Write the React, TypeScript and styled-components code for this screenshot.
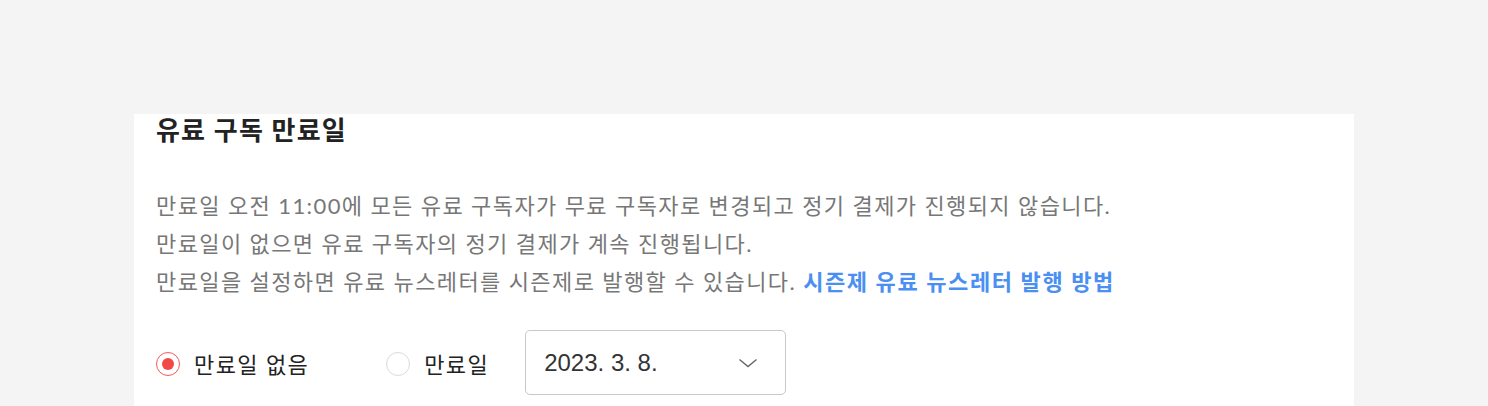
import React, { useState } from "react";
import styled, { createGlobalStyle } from "styled-components";

const GlobalStyle = createGlobalStyle`
  html, body {
    margin: 0;
    padding: 0;
    background: #f4f4f4;
  }
  body {
    font-family: "Lato", "Noto Sans CJK KR", sans-serif;
  }
`;

const Page = styled.div`
  width: 1488px;
  height: 406px;
  overflow: hidden;
  background: #f4f4f4;
  padding: 114px 0 0 134px;
  box-sizing: border-box;
`;

const Panel = styled.section`
  width: 1220px;
  height: 292px;
  background: #fff;
  padding: 0 22px;
  box-sizing: border-box;
`;

const Title = styled.h3`
  margin: 0;
  padding-top: 1px;
  font-size: 26px;
  font-weight: 700;
  color: #222;
  line-height: 30px;
  letter-spacing: 1.2px;
`;

const Desc = styled.p`
  margin: 42px 0 0;
  font-size: 22px;
  line-height: 38px;
  color: #777;
  letter-spacing: 1.4px;
`;

const Link = styled.a`
  color: #4a8ff2;
  text-decoration: none;
  font-weight: 700;
  letter-spacing: 1.6px;
`;

const OptionRow = styled.div`
  display: flex;
  align-items: center;
  margin-top: 29px;
`;

const RadioLabel = styled.label<{ $gap?: number }>`
  display: flex;
  align-items: center;
  gap: 14px;
  font-size: 22px;
  color: #222;
  letter-spacing: 1.4px;
  margin-right: ${(p) => p.$gap ?? 0}px;
  cursor: pointer;
`;

const RadioDot = styled.span<{ $checked: boolean }>`
  width: 24px;
  height: 24px;
  border-radius: 50%;
  box-sizing: border-box;
  border: 1.5px solid ${(p) => (p.$checked ? "#f25a5a" : "#dadada")};
  display: flex;
  align-items: center;
  justify-content: center;
  background: #fff;
  margin-top: 2px;

  &::after {
    content: "";
    width: 12px;
    height: 12px;
    border-radius: 50%;
    background: ${(p) => (p.$checked ? "#f24848" : "transparent")};
  }
`;

const Select = styled.div`
  width: 261px;
  height: 65px;
  box-sizing: border-box;
  border: 1px solid #c8c8c8;
  border-radius: 5px;
  display: flex;
  align-items: center;
  justify-content: space-between;
  padding: 0 27px 0 18px;
  font-family: "Liberation Sans", Arial, sans-serif;
  font-size: 24px;
  color: #333;
`;

const Chevron = () => (
  <svg width="20" height="10" viewBox="0 0 20 10" fill="none">
    <path d="M1.5 1.5L10 8.5L18.5 1.5" stroke="#666" strokeWidth="1.4" />
  </svg>
);

export default function App() {
  const [mode, setMode] = useState<"none" | "date">("none");

  return (
    <Page>
      <GlobalStyle />
      <Panel>
        <Title>유료 구독 만료일</Title>
        <Desc>
          만료일 오전 11:00에 모든 유료 구독자가 무료 구독자로 변경되고 정기 결제가 진행되지 않습니다.
          <br />
          만료일이 없으면 유료 구독자의 정기 결제가 계속 진행됩니다.
          <br />
          만료일을 설정하면 유료 뉴스레터를 시즌제로 발행할 수 있습니다.{" "}
          <Link href="#">시즌제 유료 뉴스레터 발행 방법</Link>
        </Desc>
        <OptionRow>
          <RadioLabel $gap={77} onClick={() => setMode("none")}>
            <RadioDot $checked={mode === "none"} />
            만료일 없음
          </RadioLabel>
          <RadioLabel $gap={36} onClick={() => setMode("date")}>
            <RadioDot $checked={mode === "date"} />
            만료일
          </RadioLabel>
          <Select>
            2023. 3. 8.
            <Chevron />
          </Select>
        </OptionRow>
      </Panel>
    </Page>
  );
}
